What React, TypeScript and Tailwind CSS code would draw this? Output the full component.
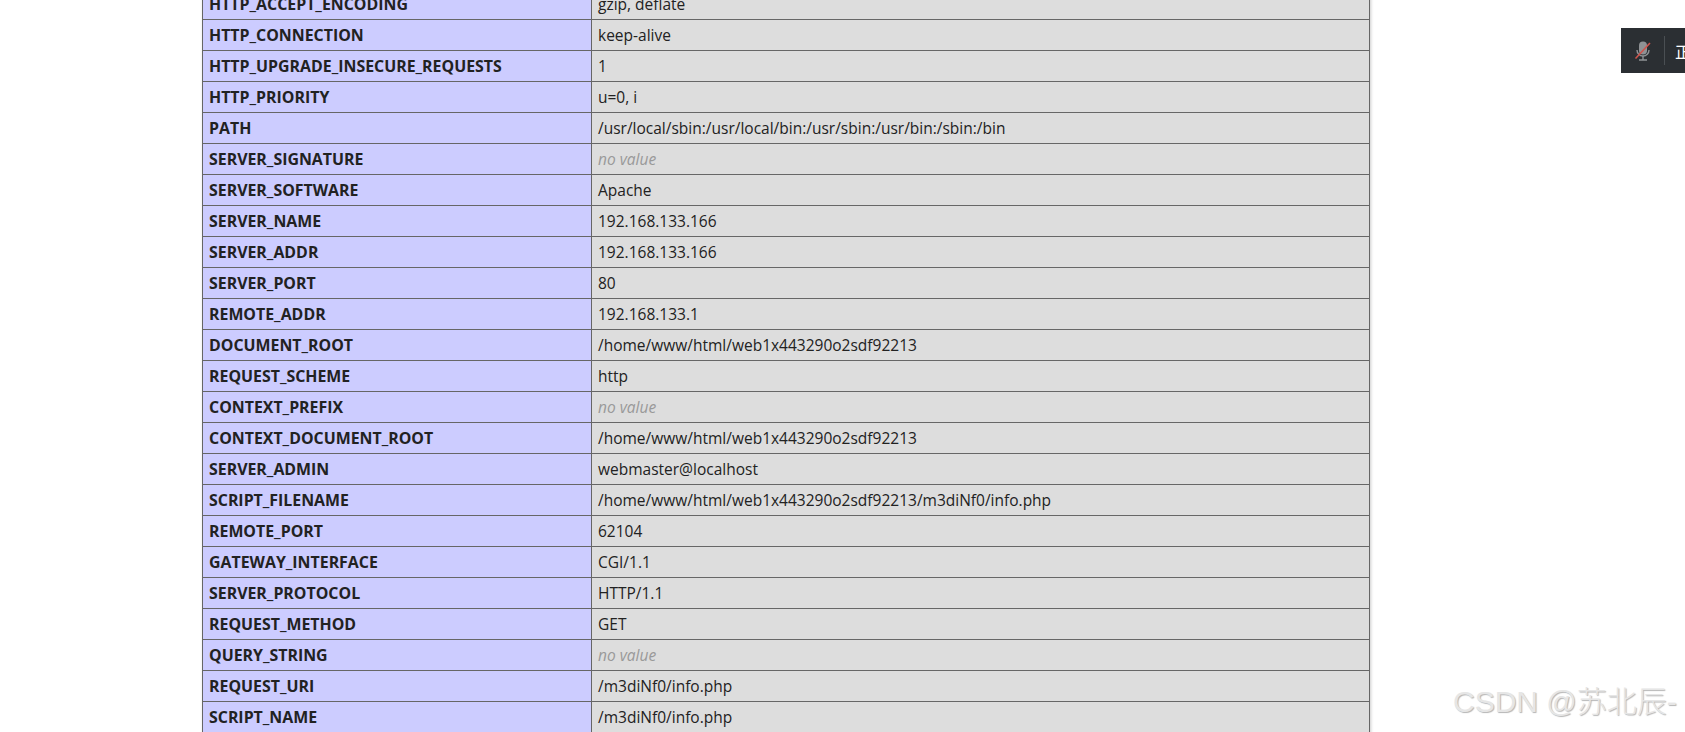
import React from 'react';

const rows: [string, string | null][] = [
  ['HTTP_ACCEPT_ENCODING', 'gzip, deflate'],
  ['HTTP_CONNECTION', 'keep-alive'],
  ['HTTP_UPGRADE_INSECURE_REQUESTS', '1'],
  ['HTTP_PRIORITY', 'u=0, i'],
  ['PATH', '/usr/local/sbin:/usr/local/bin:/usr/sbin:/usr/bin:/sbin:/bin'],
  ['SERVER_SIGNATURE', null],
  ['SERVER_SOFTWARE', 'Apache'],
  ['SERVER_NAME', '192.168.133.166'],
  ['SERVER_ADDR', '192.168.133.166'],
  ['SERVER_PORT', '80'],
  ['REMOTE_ADDR', '192.168.133.1'],
  ['DOCUMENT_ROOT', '/home/www/html/web1x443290o2sdf92213'],
  ['REQUEST_SCHEME', 'http'],
  ['CONTEXT_PREFIX', null],
  ['CONTEXT_DOCUMENT_ROOT', '/home/www/html/web1x443290o2sdf92213'],
  ['SERVER_ADMIN', 'webmaster@localhost'],
  ['SCRIPT_FILENAME', '/home/www/html/web1x443290o2sdf92213/m3diNf0/info.php'],
  ['REMOTE_PORT', '62104'],
  ['GATEWAY_INTERFACE', 'CGI/1.1'],
  ['SERVER_PROTOCOL', 'HTTP/1.1'],
  ['REQUEST_METHOD', 'GET'],
  ['QUERY_STRING', null],
  ['REQUEST_URI', '/m3diNf0/info.php'],
  ['SCRIPT_NAME', '/m3diNf0/info.php'],
];

function MutedMic() {
  return (
    <svg width="20" height="20" viewBox="0 0 20 20" fill="none">
      <rect x="6" y="0.5" width="8" height="13" rx="4" fill="#8f9295" />
      <path d="M4 9c0 3.400 2.600 6 6 6s6-2.600 6-6" stroke="#8f9295" strokeWidth="1.400" />
      <path d="M10 15v4M6 19h8" stroke="#8f9295" strokeWidth="1.400" />
      <path d="M2.500 17.500L17 2" stroke="#d0544c" strokeWidth="1.600" />
    </svg>
  );
}

export default function App() {
  return (
    <div className="relative h-[732px] w-full overflow-hidden bg-white font-['Open_Sans','Noto_Sans',sans-serif] text-[15.5px] text-[#222]">
      <div className="-mt-[12px] pl-[202px]">
        <table className="w-[1168px] table-fixed border-collapse shadow-[1px_2px_3px_#ccc]">
          <tbody>
            {rows.map(([name, value]) => (
              <tr key={name} className="h-[31px]">
                <td className="w-[389px] border border-[#666] bg-[#ccf] py-0 pl-[6px] pr-[7px] text-[15.9px] font-bold leading-[28px] text-[#222]">{name}</td>
                <td className="border border-[#666] bg-[#ddd] py-0 pl-[6px] pr-[7px] leading-[28px]">
                  {value ?? <i className="text-[#999]">no value</i>}
                </td>
              </tr>
            ))}
          </tbody>
        </table>
      </div>

      {/* floating recorder bar */}
      <div className="absolute left-[1621px] top-[28px] flex h-[45px] w-[64px] items-center overflow-hidden bg-[#2b2f33]">
        <div className="flex h-[29px] w-[44px] shrink-0 items-center justify-center border-r border-[#4a4f53]">
          <MutedMic />
        </div>
        <span className="ml-[10px] shrink-0 font-['Noto_Sans_CJK_SC',sans-serif] text-[16px] text-white">正在</span>
      </div>

      {/* watermark */}
      <div className="absolute left-[1453px] top-[680px] whitespace-nowrap font-['Liberation_Sans','Noto_Sans_CJK_SC',sans-serif] text-[30px] font-light leading-[44px] text-[#e6e6e6] [text-shadow:1px_1px_1px_#b5b5b5]">
        CSDN @苏北辰-
      </div>
    </div>
  );
}
